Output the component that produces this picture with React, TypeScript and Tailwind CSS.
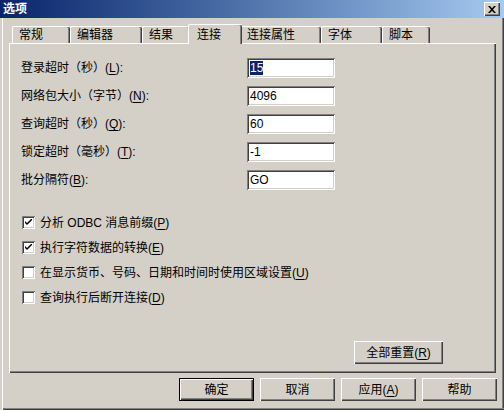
import React from "react";

const FONT = { fontFamily: '"Liberation Sans", "Noto Sans CJK SC", sans-serif' };

const raised =
  "shadow-[inset_1px_1px_0_#ffffff,inset_-1px_-1px_0_#404040,inset_-2px_-2px_0_#808080]";
const sunken =
  "shadow-[inset_1px_1px_0_#808080,inset_-1px_-1px_0_#ffffff,inset_2px_2px_0_#404040,inset_-2px_-2px_0_#d4d0c8]";

function Mn({ text, k, after = "" }: { text: string; k: string; after?: string }) {
  return (
    <span>
      {text}(<span className="underline underline-offset-[2px]">{k}</span>){after}
    </span>
  );
}

function Tab({ label, w, active }: { label: string; w: number; active?: boolean }) {
  if (active) {
    return (
      <div
        className="relative z-10 -mx-[2px] -mb-[1px] h-[20px] bg-[#d4d0c8] border-l border-t border-white rounded-tl-[2px] rounded-tr-[2px] shadow-[inset_-1px_0_0_#404040,inset_-2px_0_0_#808080] pl-[8px] pt-[2px] text-[12px] leading-[16px] text-black"
        style={{ width: w + 4 }}
      >
        {label}
      </div>
    );
  }
  return (
    <div
      className="h-[17px] bg-[#d4d0c8] border-l border-t border-white rounded-tl-[2px] rounded-tr-[2px] shadow-[inset_-1px_0_0_#404040,inset_-2px_0_0_#808080] pl-[6px] pt-[1px] text-[12px] leading-[15px] text-black"
      style={{ width: w }}
    >
      {label}
    </div>
  );
}

function Field({ children, value, sel }: { children: React.ReactNode; value: string; sel?: boolean }) {
  return (
    <div className="flex h-[28px] items-center">
      <div className="w-[226px] text-[12px] text-black">{children}</div>
      <div className={`flex h-[20px] w-[88px] items-center bg-white pl-[3px] text-[12px] text-black ${sunken}`}>
        {sel ? <span className="bg-[#0a246a] text-white leading-[14px]">{value}</span> : <span>{value}</span>}
      </div>
    </div>
  );
}

function Check({ checked, children }: { checked?: boolean; children: React.ReactNode }) {
  return (
    <div className="flex h-[25px] items-center">
      <div className={`flex h-[13px] w-[13px] items-center justify-center bg-white ${sunken}`}>
        {checked && (
          <svg width="7" height="7" viewBox="0 0 7 7">
            <path d="M0 2 L0 4 L2 6 L7 1 L7 -1 L2 4 Z" fill="#000" />
          </svg>
        )}
      </div>
      <div className="ml-[5px] text-[12px] text-black">{children}</div>
    </div>
  );
}

function Btn({ children, def, w = 75 }: { children: React.ReactNode; def?: boolean; w?: number }) {
  return (
    <div
      className={`flex h-[23px] items-center justify-center bg-[#d4d0c8] text-[12px] text-black ${
        def
          ? "border border-black shadow-[inset_1px_1px_0_#ffffff,inset_-1px_-1px_0_#404040,inset_-2px_-2px_0_#808080]"
          : raised
      }`}
      style={{ width: w }}
    >
      {children}
    </div>
  );
}

export default function App() {
  return (
    <div
      className="flex h-[410px] w-[504px] flex-col bg-[#d4d0c8] shadow-[inset_2px_0_0_#d4d0c8,inset_3px_0_0_#ffffff,inset_0_-1px_0_#404040,inset_0_-2px_0_#808080,inset_-1px_0_0_#404040,inset_-2px_0_0_#808080]"
      style={FONT}
    >
      {/* Title bar */}
      <div className="flex h-[18px] items-center justify-between bg-gradient-to-r from-[#0a246a] to-[#a6caf0] pl-[3px] pr-[4px]">
        <span className="text-[12px] font-bold leading-[16px] text-white">选项</span>
        <div className={`flex h-[14px] w-[16px] items-center justify-center bg-[#d4d0c8] ${raised}`}>
          <svg width="8" height="7" viewBox="0 0 8 7">
            <path d="M0 0 L2 0 L4 2.2 L6 0 L8 0 L5 3.5 L8 7 L6 7 L4 4.8 L2 7 L0 7 L3 3.5 Z" fill="#000" />
          </svg>
        </div>
      </div>

      {/* Tabs */}
      <div className="ml-[12px] mt-[6px] flex h-[19px] items-end">
        <Tab label="常规" w={58} />
        <Tab label="编辑器" w={72} />
        <Tab label="结果" w={48} />
        <Tab label="连接" w={50} active />
        <Tab label="连接属性" w={81} />
        <Tab label="字体" w={61} />
        <Tab label="脚本" w={48} />
      </div>

      {/* Panel */}
      <div className="ml-[9px] flex h-[330px] w-[487px] flex-col border-l border-t border-white shadow-[inset_-1px_-1px_0_#404040,inset_-2px_-2px_0_#808080]">
        <div className="ml-[11px] mt-[10px] flex flex-col">
          <Field value="15" sel>
            登录超时（秒）<Mn text="" k="L" after=":" />
          </Field>
          <Field value="4096">
            网络包大小（字节）<Mn text="" k="N" after=":" />
          </Field>
          <Field value="60">
            查询超时（秒）<Mn text="" k="Q" after=":" />
          </Field>
          <Field value="-1">
            锁定超时（毫秒）<Mn text="" k="T" after=":" />
          </Field>
          <Field value="GO">
            批分隔符<Mn text="" k="B" after=":" />
          </Field>
        </div>

        <div className="ml-[12px] mt-[16px] flex flex-col">
          <Check checked>
            分析 ODBC 消息前缀<Mn text="" k="P" />
          </Check>
          <Check checked>
            执行字符数据的转换<Mn text="" k="E" />
          </Check>
          <Check>
            在显示货币、号码、日期和时间时使用区域设置<Mn text="" k="U" />
          </Check>
          <Check>
            查询执行后断开连接<Mn text="" k="D" />
          </Check>
        </div>

        <div className="mb-[9px] mr-[53px] mt-auto flex justify-end">
          <Btn w={89}>
            全部重置<Mn text="" k="R" />
          </Btn>
        </div>
      </div>

      {/* Bottom buttons */}
      <div className="mr-[7px] mt-[5px] flex justify-end gap-[6px]">
        <Btn def>确定</Btn>
        <Btn>取消</Btn>
        <Btn>
          应用 <Mn text="" k="A" />
        </Btn>
        <Btn>帮助</Btn>
      </div>
    </div>
  );
}
